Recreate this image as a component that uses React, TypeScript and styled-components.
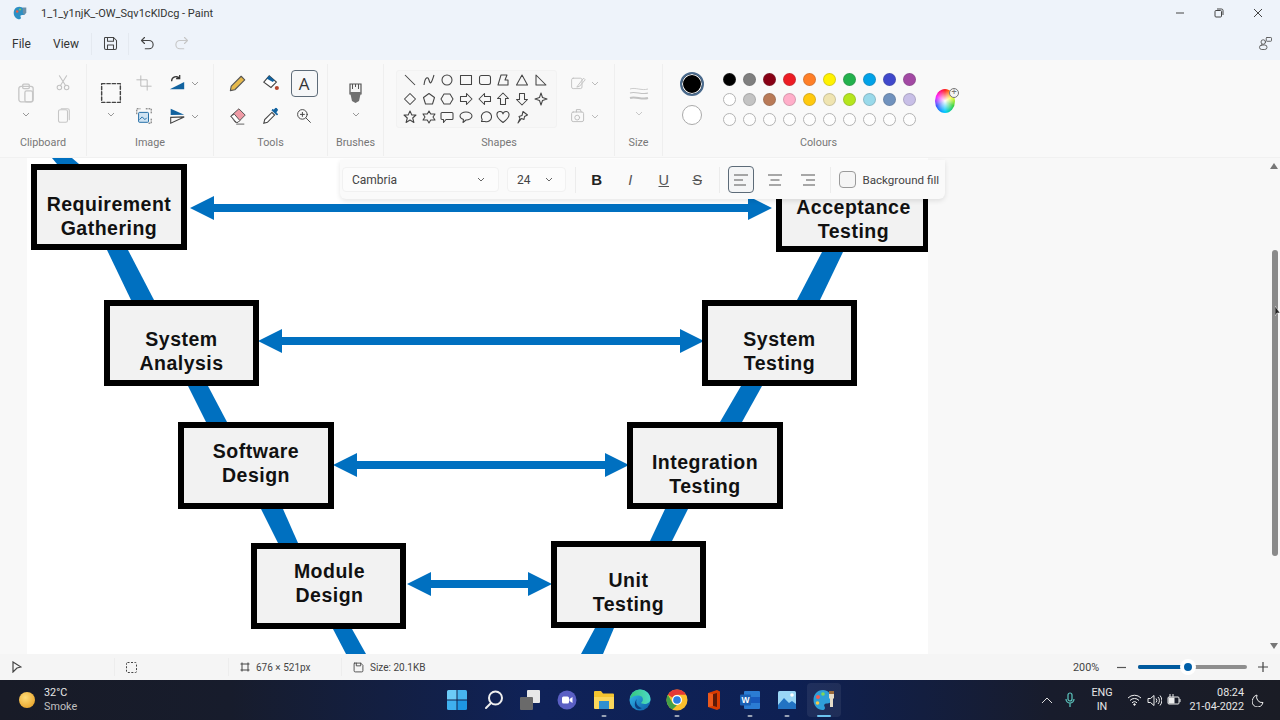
import React from "react";
import styled, { createGlobalStyle } from "styled-components";

const Global = createGlobalStyle`
  html, body { margin: 0; padding: 0; width: 1280px; height: 720px; overflow: hidden; }
  * { box-sizing: border-box; }
  body { font-family: Roboto, "Open Sans", "Liberation Sans", sans-serif; color: #222; }
`;

const Window = styled.div`
  width: 1280px; height: 720px; display: flex; flex-direction: column; background: #f8f8f8; overflow: hidden;
`;
const TitleBar = styled.div`
  height: 26px; flex: none; background: #eef3fa; display: flex; align-items: center; padding: 0 3px 0 13px;
`;
const TitleText = styled.span`
  margin-left: 14px; font-size: 11px; color: #333; flex: 1; white-space: nowrap;
`;
const WinButton = styled.div`
  width: 39px; height: 26px; display: flex; align-items: center; justify-content: center;
`;
const MenuBar = styled.div`
  height: 34px; flex: none; background: #eef3fa; display: flex; align-items: center; padding: 1px 7px 0 12px;
`;
const MenuItem = styled.span<{ $w: number }>`
  width: ${(p) => p.$w}px; font-size: 12px; color: #333; flex: none;
`;
const MenuSep = styled.div`
  width: 1px; height: 22px; background: #e4e9f0; flex: none;
`;
const MenuIcon = styled.div<{ $w: number }>`
  width: ${(p) => p.$w}px; display: flex; justify-content: center; flex: none;
`;
const Spacer = styled.div`flex: 1;`;

const Ribbon = styled.div`
  height: 98px; flex: none; background: #f9f9f9; padding-top: 4px; display: flex; border-bottom: 1px solid #f1f1f1;
`;
const Group = styled.div<{ $w: number; $last?: boolean }>`
  width: ${(p) => p.$w}px; height: 92px; flex: none; border-right: ${(p) => (p.$last ? "none" : "1px solid #efefef")};
  display: flex; flex-direction: column;
`;
const GroupBody = styled.div`
  height: 68.5px; padding-top: 2.5px; display: flex; flex: none;
`;
const GroupLabel = styled.div`
  height: 14px; margin-top: 3.5px; line-height: 14px; text-align: center; font-size: 10.8px; color: #777;
`;
const ToolGrid = styled.div<{ $cols: string; $pad?: number }>`
  display: grid; grid-template-columns: ${(p) => p.$cols}; grid-auto-rows: 33px; padding-left: ${(p) => p.$pad || 0}px;
`;
const Cell = styled.div<{ $col?: number }>`
  display: flex; align-items: center; justify-content: center; min-width: 0;
  ${(p) => (p.$col ? `grid-column: ${p.$col};` : "")}
  svg { flex: none; }
`;
const LargeCell = styled.div<{ $top?: number }>`
  grid-row: span 2; display: flex; flex-direction: column; align-items: center; padding-top: ${(p) => p.$top ?? 15}px; gap: 8px;
  svg { flex: none; }
`;
const ActiveTool = styled.div`
  width: 27px; height: 27px; border: 1px solid #5d6b78; border-radius: 4px; background: #f6f7f8;
  display: flex; align-items: center; justify-content: center; font-size: 17px; line-height: 1; color: #333;
  font-family: "Open Sans", sans-serif;
`;
const ShapePanel = styled.div`
  width: 161px; height: 58px; margin: 3.5px 4.5px 0 12px; background: #f7f7f7; border: 1px solid #f2f2f2; border-radius: 3px;
  display: grid; grid-template-columns: repeat(8, 18.7px); grid-auto-rows: 18.6px; padding: 0 0 0 3.7px; flex: none;
`;
const ShapeCell = styled.div`
  display: flex; align-items: center; justify-content: center;
`;
const CurrentColors = styled.div`
  margin: 5px 0 0 19px; width: 20px; display: flex; flex-direction: column; align-items: center; gap: 9px; flex: none;
`;
const SelectedColor = styled.div`
  width: 24px; height: 24px; border-radius: 50%; border: 2px solid #4a6a8c; background: #000; box-shadow: inset 0 0 0 1px #fff; flex: none;
`;
const SecondColor = styled.div`
  width: 20px; height: 20px; border-radius: 50%; border: 1px solid #aaa; background: #fff; flex: none;
`;
const Palette = styled.div`
  margin: 2.5px 0 0 17px; display: grid; grid-template-columns: repeat(10, 20px); grid-auto-rows: 20px; flex: none;
`;
const SwatchCell = styled.div`display: flex; align-items: center; justify-content: center;`;
const Swatch = styled.div<{ $c?: string }>`
  width: 13px; height: 13px; border-radius: 50%; background: ${(p) => p.$c || "#fdfdfd"};
  border: 1px solid ${(p) => (p.$c && p.$c !== "#fff" ? "rgba(90,90,90,0.25)" : "#b4b4b4")};
`;
const WheelWrap = styled.div`
  position: relative; margin: 22px 0 0 16px; width: 19px; height: 24px; flex: none;
`;
const Wheel = styled.div`
  width: 20px; height: 24px; border-radius: 50%;
  background: radial-gradient(circle, #fff 0%, rgba(255,255,255,0) 70%), conic-gradient(#ff2020, #ff0, #2c2, #0cf, #24f, #f0f, #ff2020);
`;
const WheelPlus = styled.div`
  position: absolute; right: -5px; top: -1px; width: 10px; height: 10px; border-radius: 50%; background: #f4f4f4; border: 1px solid #777;
  font-size: 9px; line-height: 7px; text-align: center; color: #777;
`;

const Workspace = styled.div`
  flex: 1; min-height: 0; position: relative; display: flex; background: #f8f8f8; padding-left: 27px;
`;
const Page = styled.div`
  position: relative; width: 901px; height: 100%; background: #fff; overflow: hidden; flex: none;
`;
const DiagramLines = styled.svg`
  position: absolute; left: 0; top: 0; width: 901px; height: 496px;
`;
const Node = styled.div<{ $x: number; $y: number; $w: number; $h: number }>`
  position: absolute; left: ${(p) => p.$x}px; top: ${(p) => p.$y}px; width: ${(p) => p.$w}px; height: ${(p) => p.$h}px;
  border: 6px solid #000; background: #f2f2f2; display: flex; align-items: center; justify-content: center;
`;
const NodeLabel = styled.div<{ $dx: number; $dy: number }>`
  font-family: "Liberation Sans", Arial, sans-serif; font-weight: 700; font-size: 19.5px; line-height: 24px; letter-spacing: 0.5px;
  color: #111; text-align: center; white-space: pre-line; transform: translate(${(p) => p.$dx}px, ${(p) => p.$dy}px);
`;
const ScrollTrack = styled.div`
  position: absolute; right: 0; top: 0; bottom: 0; width: 12px; display: flex; flex-direction: column; align-items: center; justify-content: space-between; padding: 5px 0 5px;
`;
const ScrollThumb = styled.div`
  position: absolute; right: 2.5px; top: 92px; width: 6px; height: 306px; border-radius: 3px; background: #8a8a8a;
`;
const PointerMark = styled.svg`
  position: absolute; left: 7px; top: 148px;
`;
const TextToolbar = styled.div`
  position: absolute; left: 340px; top: 2px; width: 605px; height: 39px; background: #fafafa; border-radius: 0 0 6px 6px;
  box-shadow: 0 2px 5px rgba(0,0,0,0.10); display: flex; align-items: center; padding-left: 2px;
`;
const SelectBox = styled.div<{ $w: number; $chev: number }>`
  width: ${(p) => p.$w}px; height: 25px; margin-right: 8px; border: 1px solid #f1f1f1; border-radius: 4px; background: #fcfcfc; flex: none;
  display: flex; align-items: center; justify-content: space-between; padding: 0 ${(p) => p.$chev}px 0 9px; font-size: 12px; color: #444;
`;
const ToolbarSep = styled.div<{ $l: number; $r: number }>`
  width: 1px; height: 26px; background: #ececec; flex: none; margin: 0 ${(p) => p.$r}px 0 ${(p) => p.$l}px;
`;
const FmtButton = styled.div<{ $b?: boolean; $i?: boolean; $u?: boolean; $s?: boolean }>`
  width: 33.5px; height: 26px; display: flex; align-items: center; justify-content: center; flex: none; color: #555;
  font-family: "Liberation Sans", sans-serif; font-size: ${(p) => (p.$b ? 15 : 14.5)}px;
  font-weight: ${(p) => (p.$b ? 800 : 400)}; font-style: ${(p) => (p.$i ? "italic" : "normal")};
  text-decoration: ${(p) => (p.$u ? "underline" : p.$s ? "line-through" : "none")};
  ${(p) => (p.$b ? "color:#222;" : "")}
`;
const AlignButton = styled.div<{ $on?: boolean }>`
  width: 26px; height: 27px; margin-right: 7.5px; flex: none; display: flex; align-items: center; justify-content: center;
  border-radius: 4px; border: 1px solid ${(p) => (p.$on ? "#5d6b78" : "transparent")}; background: ${(p) => (p.$on ? "#f4f5f6" : "transparent")};
`;
const CheckBox = styled.div`
  width: 17px; height: 17px; margin: 0 7px 0 8px; border: 1px solid #9a9a9a; border-radius: 4px; background: #f5f5f5; flex: none;
`;
const FillLabel = styled.span`
  font-size: 11.6px; color: #444; white-space: nowrap;
`;

const StatusBar = styled.div`
  height: 26px; flex: none; background: #f5f5f5; display: flex; align-items: center; font-size: 10.8px; color: #444;
`;
const StatusSection = styled.div<{ $w: number; $pad: number; $last?: boolean }>`
  width: ${(p) => p.$w}px; height: 18px; flex: none; padding-left: ${(p) => p.$pad}px; display: flex; align-items: center; gap: 6px; white-space: nowrap;
  font-size: 10px; border-right: ${(p) => (p.$last ? "none" : "1px solid #ededed")};
`;
const ZoomPct = styled.span`
  width: 43.5px; flex: none;
`;
const ZoomTrack = styled.div`
  position: relative; width: 109px; height: 4px; border-radius: 2px; margin: 0 11px 0 12.5px; background: #8e8e8e; flex: none;
`;
const ZoomFill = styled.div`
  width: 46%; height: 100%; border-radius: 2px; background: #005a9e;
`;
const ZoomThumb = styled.div`
  position: absolute; left: 42px; top: -6px; width: 16px; height: 16px; border-radius: 50%; background: #005fa8; border: 4px solid #fff;
`;
const StatusEnd = styled.div`
  width: 12px; flex: none;
`;

const Taskbar = styled.div`
  height: 40px; flex: none; display: flex; align-items: stretch;
  background: linear-gradient(90deg, #181b27 0%, #171c2c 18%, #0f2258 42%, #0e2053 62%, #181c2c 82%, #1a1c25 100%);
  color: #eee;
`;
const Weather = styled.div`
  width: 438.6px; flex: none; padding-left: 19px; display: flex; align-items: center; gap: 9px;
`;
const Sun = styled.div`
  width: 16px; height: 16px; border-radius: 50%; background: radial-gradient(circle at 40% 35%, #ffdc78, #e9a52c 80%);
`;
const WeatherText = styled.div`
  font-size: 10.8px; line-height: 14px; color: #e8e8e8;
`;
const Muted = styled.div`color: #c0c0c0;`;
const AppIcons = styled.div`display: flex; flex: none;`;
const AppCell = styled.div<{ $active?: boolean; $dot?: boolean }>`
  position: relative; width: 36.7px; height: 40px; display: flex; align-items: center; justify-content: center;
  &::before {
    content: ""; display: ${(p) => (p.$active ? "block" : "none")}; position: absolute; left: 2px; right: 1px; top: 3px; bottom: 3px;
    background: rgba(255,255,255,0.07); border-radius: 4px;
  }
  &::after {
    content: ""; display: ${(p) => (p.$dot || p.$active ? "block" : "none")}; position: absolute; bottom: 3px; left: 50%;
    width: ${(p) => (p.$active ? 14 : 5)}px; height: 2px; border-radius: 1px; transform: translateX(-50%);
    background: ${(p) => (p.$active ? "#6cc4f0" : "#9aa3b5")};
  }
  svg { position: relative; }
`;
const Tray = styled.div`
  margin-left: auto; padding-right: 8px; display: flex; align-items: center;
`;
const TrayItem = styled.div<{ $w: number }>`
  width: ${(p) => p.$w}px; flex: none; display: flex; align-items: center; justify-content: center;
`;
const TrayText = styled.div<{ $w: number; $right?: boolean }>`
  width: ${(p) => p.$w}px; flex: none; font-size: 10.8px; line-height: 14px; color: #e6e6e6; text-align: ${(p) => (p.$right ? "right" : "center")};
`;

/* ------- icons ------- */
type IP = { c?: string };
const Svg: React.FC<{ s: number; children: React.ReactNode; sw?: number; c?: string }> = ({ s, children, sw = 1.2, c = "#555" }) => (
  <svg width={s} height={s} viewBox="0 0 20 20" fill="none" stroke={c} strokeWidth={sw} strokeLinecap="round" strokeLinejoin="round">{children}</svg>
);
const Chev = ({ c = "#999" }: IP) => (
  <svg width="8" height="5" viewBox="0 0 8 5" fill="none" stroke={c} strokeWidth="1"><path d="M1 1l3 3 3-3" /></svg>
);
const PasteIcon = () => (<Svg s={22} c="#c6c6c6"><rect x="3.5" y="4" width="13" height="14" rx="2" /><rect x="7" y="2" width="6" height="4" rx="1" /><rect x="9" y="8" width="7" height="10" rx="1.5" /></Svg>);
const CutIcon = () => (<Svg s={18} c="#c2c2c2"><circle cx="6" cy="15" r="2.5" /><circle cx="14" cy="15" r="2.5" /><path d="M7 13L14 2M13 13L6 2" /></Svg>);
const CopyIcon = () => (<Svg s={18} c="#c6c6c6"><rect x="5" y="3" width="10" height="14" rx="2" /><path d="M8 2h7a2 2 0 012 2v10" /></Svg>);
const SelectIcon = () => (<Svg s={22} sw={1.3} c="#444"><rect x="1.500" y="1.500" width="17" height="17" strokeDasharray="3 1.800" /></Svg>);
const CropIcon = () => (<Svg s={16} c="#bbb"><path d="M6 1v13h13M1 6h13v13" /></Svg>);
const RotateIcon = () => (<svg width="18" height="18" viewBox="0 0 20 20"><path d="M2 17L18 9v8z" fill="#11629f" /><path d="M4 8a5 5 0 019-3M13 1v4h-4" fill="none" stroke="#333" strokeWidth="1.4" /></svg>);
const ResizeIcon = () => (<svg width="18" height="18" viewBox="0 0 20 20" fill="none"><rect x="4" y="6" width="11" height="11" rx="1" fill="#cfe3f2" stroke="#11629f" /><path d="M5 14l3-3 3 3 2-2" stroke="#11629f" /><path d="M12 2h6v6M2 8V2h4M18 13v5h-3" stroke="#555" strokeDasharray="2 1" /></svg>);
const FlipIcon = () => (<svg width="18" height="18" viewBox="0 0 20 20"><path d="M3 2l15 6.5L3 9z" fill="#11629f" /><path d="M3 11.5l15-.5L3 18z" fill="none" stroke="#444" strokeWidth="1.2" /></svg>);
const PencilIcon = () => (<svg width="18" height="18" viewBox="0 0 20 20"><path d="M13.5 2.5l4 4L6.5 17.5l-5 1 1-5z" fill="#e6b94c" stroke="#555" strokeWidth="1.2" strokeLinejoin="round" /></svg>);
const FillIcon = () => (<svg width="18" height="18" viewBox="0 0 20 20"><path d="M2 9l6-7 8 7-6 6z" fill="#fff" stroke="#444" strokeWidth="1.2" /><path d="M5 5l3-3 6 5-2 2z" fill="#11629f" /><circle cx="16.5" cy="15.5" r="2.3" fill="#b5452c" /></svg>);
const EraserIcon = () => (<svg width="18" height="18" viewBox="0 0 20 20"><path d="M2 10L11 2l7 7-8 8H7z" fill="#ef9aa5" stroke="#555" strokeWidth="1.1" /><path d="M2 10l6 7h2l2-2-6-7z" fill="#fff" stroke="#555" strokeWidth="1.1" /><path d="M8 19h9" stroke="#555" /></svg>);
const PickerIcon = () => (<svg width="18" height="18" viewBox="0 0 20 20"><path d="M11 6l3 3-8 8-4 1 1-4z" fill="#fff" stroke="#444" strokeWidth="1.2" /><path d="M11 3.5l5.5 5.5 1-1-2-2L17 4a1.7 1.7 0 00-2.5-2.2L13 3.5l-1-1z" fill="#11629f" stroke="#11629f" /></svg>);
const ZoomIcon = () => (<Svg s={16} c="#444"><circle cx="8" cy="8" r="6" /><path d="M12.5 12.5L18 18M8 5.5v5M5.5 8h5" /></Svg>);
const BrushIcon = () => (<svg width="13" height="21" viewBox="0 0 13 21"><path d="M1 1h11v10H1z" fill="#f4f4f4" stroke="#555" strokeWidth="1.200" /><path d="M1 9h11l-2 9-3.500 2L3 18z" fill="#707070" /><path d="M3.500 1v5M6.500 1v3M9.500 1v5" stroke="#555" strokeWidth="1" /></svg>);
const OutlineIcon = () => (<Svg s={16} c="#c2c2c2"><rect x="2" y="4" width="13" height="13" rx="2" /><path d="M10 13l7-9 2 2-7 8-3 1z" /></Svg>);
const ShapeFillIcon = () => (<Svg s={16} c="#bdbdbd"><rect x="2" y="5" width="15" height="12" rx="2" /><circle cx="9" cy="12" r="3" /><path d="M8 5V2h5l1 3" /></Svg>);
const SizeIcon = () => (<svg width="20" height="16" viewBox="0 0 20 16" fill="none" stroke="#c2c2c2"><path d="M1 2c5-2 12 2 18 0" strokeWidth=".8" /><path d="M1 6c5-2 12 2 18 0" strokeWidth="1.2" /><path d="M1 11c5-2 12 2 18 0" strokeWidth="2" /></svg>);

const shapes: React.ReactNode[] = [
  <path d="M2 2l10 10" />, <path d="M2 12c1-8 4-9 5-5s2 5 5-5" />, <circle cx="7" cy="7" r="5" />,
  <rect x="1.5" y="2.5" width="11" height="9" />, <rect x="1.5" y="2.5" width="11" height="9" rx="2" />,
  <path d="M5 2h6L9 7h3v5H2z" />, <path d="M7 2l5.5 10h-11z" />, <path d="M2 2l10 10H2z" />,
  <path d="M7 1.5L12.5 7 7 12.5 1.5 7z" />, <path d="M7 1.5l5.5 4-2 6.5h-7l-2-6.5z" />, <path d="M4 2h6l3 5-3 5H4L1 7z" />,
  <path d="M1.5 4.5h6V1.5L13 7l-5.5 5.5v-3h-6z" />, <path d="M12.5 4.5h-6V1.5L1 7l5.5 5.5v-3h6z" />,
  <path d="M4.5 12.5v-6h-3L7 1l5.5 5.5h-3v6z" />, <path d="M4.5 1.5v6h-3L7 13l5.5-5.5h-3v-6z" />, <path d="M7 1l1.5 4.5L13 7l-4.5 1.5L7 13l-1.5-4.5L1 7l4.5-1.5z" />,
  <path d="M7 1l1.8 4h4.2l-3.3 3 1.2 4.5L7 10l-3.9 2.5L4.3 8 1 5h4.2z" />, <path d="M7 1l1.7 3H13l-2 3 2 3H8.700L7 13l-1.700-3H1l2-3-2-3h4.300z" />,
  <path d="M2 2.5h10a1 1 0 011 1v5a1 1 0 01-1 1H6l-2.5 3v-3H2a1 1 0 01-1-1v-5a1 1 0 011-1z" />,
  <path d="M7 2c3.3 0 6 1.8 6 4s-2.7 4-6 4l-3 2.5.5-3C2.4 8.8 1 7.500 1 6c0-2.200 2.700-4 6-4z" />,
  <path d="M7 2a5 5 0 110 9.500H3.500l.7-2A5 5 0 017 2z" />,
  <path d="M7 12.500C3 9.500 1 7.500 1 5a3 3 0 016-1 3 3 0 016 1c0 2.500-2 4.500-6 7.500z" />,
  <path d="M8 1.500l4.500 3.500-3 1.500-.5 3-2.500-1L3 13l2-4.500-1-2 3-1z" />,
];
const ShapeSvg: React.FC<{ children: React.ReactNode }> = ({ children }) => (
  <svg width="14" height="14" viewBox="0 0 14 14" fill="none" stroke="#444" strokeWidth="1.05" strokeLinejoin="round">{children}</svg>
);

const row1 = ["#000", "#7f7f7f", "#880015", "#ed1c24", "#ff7f27", "#fff200", "#22b14c", "#00a2e8", "#3f48cc", "#a349a4"];
const row2 = ["#fff", "#c3c3c3", "#b97a57", "#ffaec9", "#ffc90e", "#efe4b0", "#b5e61d", "#99d9ea", "#7092be", "#c8bfe7"];
const row3 = Array.from({ length: 10 }, () => undefined as string | undefined);

const nodes = [
  { x: 4, y: 6, w: 156, h: 86, dx: 0, dy: 9, t: "Requirement\nGathering" },
  { x: 749, y: 8, w: 153, h: 86, dx: 1, dy: 10, t: "Acceptance\nTesting" },
  { x: 77, y: 142, w: 155, h: 86, dx: 0, dy: 8, t: "System\nAnalysis" },
  { x: 675, y: 142, w: 155, h: 86, dx: 0, dy: 8, t: "System\nTesting" },
  { x: 151, y: 264, w: 156, h: 87, dx: 0, dy: -3, t: "Software\nDesign" },
  { x: 600, y: 264, w: 156, h: 87, dx: 0, dy: 8, t: "Integration\nTesting" },
  { x: 224, y: 385, w: 155, h: 86, dx: 1, dy: -3, t: "Module\nDesign" },
  { x: 524, y: 383, w: 155, h: 87, dx: 0, dy: 7, t: "Unit\nTesting" },
];

const BLUE = "#0070c0";
const bars = [
  "25,0 45,0 52,6 30,6", "80,92 101,92 127,142 104,142", "795,94 816,94 793,142 770,142",
  "161,228 181,228 200,264 179,264", "714,228 735,228 715,264 693,264", "234,351 256,351 271,385 251,385",
  "638,351 661,351 645,383 623,383", "306,471 325,471 339,496 319,496", "568,470 587,470 576,496 554,496",
];
const arrow = (a: number, b: number, y: number) =>
  `${a},${y} ${a + 24},${y - 12} ${a + 24},${y - 4} ${b - 24},${y - 4} ${b - 24},${y - 12} ${b},${y} ${b - 24},${y + 12} ${b - 24},${y + 4} ${a + 24},${y + 4} ${a + 24},${y + 12}`;
const arrows = [arrow(163, 745, 50), arrow(231, 677, 183), arrow(306, 602, 307), arrow(380, 525, 426)];

const Edge = () => (
  <svg width="24" height="24" viewBox="0 0 24 24">
    <defs><linearGradient id="edgeA" x1="0" y1="0" x2="1" y2="1"><stop offset="0" stopColor="#35c1f1" /><stop offset="1" stopColor="#0c59a4" /></linearGradient>
      <linearGradient id="edgeB" x1="0" y1="0" x2="1" y2="0"><stop offset="0" stopColor="#37c87a" /><stop offset="1" stopColor="#4bd8c8" /></linearGradient></defs>
    <circle cx="12" cy="12" r="10.500" fill="url(#edgeA)" />
    <path d="M2 11C3 5 7 1.500 12 1.500c6 0 10.500 4.500 10.500 9.500 0 3.500-3 5-6 5-2 0-3.500-1-3.500-1 3-2 2.500-7-2-7.500-4-.5-7.500 1-9 3.500z" fill="url(#edgeB)" />
    <path d="M9 11c-2 3 0 8 5 9-1 .5-2 1-3 1-4 0-6-6-2-10z" fill="#0c3f80" />
  </svg>
);
const Chrome = () => (
  <svg width="24" height="24" viewBox="0 0 24 24">
    <circle cx="12" cy="12" r="10.500" fill="#fbc02d" />
    <path d="M12 1.500a10.500 10.500 0 019.100 5.250H12a5.250 5.250 0 00-4.550 2.630L2.900 6.750A10.500 10.500 0 0112 1.500z" fill="#e53935" />
    <path d="M2.900 6.750l4.550 7.880A5.250 5.250 0 0012 17.250l-4.550 4.200A10.500 10.500 0 012.900 6.750z" fill="#43a047" />
    <circle cx="12" cy="12" r="5" fill="#fff" /><circle cx="12" cy="12" r="3.800" fill="#2a7de1" />
  </svg>
);
const PaintApp = () => (
  <svg width="24" height="24" viewBox="0 0 24 24">
    <path d="M11 2C5 2 1.500 6.500 1.500 12c0 6 4.500 10 9 10 2.500 0 3-2 2-3.500-1-1.500 0-3 2-3 3 0 5-1 5-4.500C19.500 6 16 2 11 2z" fill="#2f9fd8" />
    <circle cx="6" cy="9" r="2" fill="#f25c54" /><circle cx="11" cy="6" r="1.800" fill="#7ed957" /><circle cx="5.500" cy="15" r="1.800" fill="#f7c948" />
    <path d="M17 3h5v7l-1 1v8h-3v-8l-1-1z" fill="#e6dcc8" /><path d="M17 3h5v3h-5z" fill="#9a6a3c" />
  </svg>
);

export default function App() {
  return (
    <Window>
      <Global />
      <TitleBar>
        <svg width="14" height="14" viewBox="0 0 20 20"><path d="M9 1C4 1 1 5 1 10c0 5 4 9 8 9 2 0 3-2 2-3-1-2 0-3 2-3 3 0 5-1 5-4 0-4-4-8-9-8z" fill="#2d8fc4" /><circle cx="6" cy="8" r="1.800" fill="#e8604c" /><circle cx="10" cy="5" r="1.600" fill="#7cc35a" /><path d="M14 2h5v7l-2 3h-2l-1-3z" fill="#6b8fa8" /></svg>
        <TitleText>1_1_y1njK_-OW_Sqv1cKlDcg - Paint</TitleText>
        <WinButton><svg width="10" height="10" viewBox="0 0 10 10" stroke="#444"><path d="M1 5h8" /></svg></WinButton>
        <WinButton><svg width="10" height="10" viewBox="0 0 10 10" fill="none" stroke="#444"><rect x="1" y="2.500" width="6.500" height="6.500" rx="1" /><path d="M3 1h4.500A1.500 1.500 0 019 2.500V7" /></svg></WinButton>
        <WinButton><svg width="10" height="10" viewBox="0 0 10 10" stroke="#444"><path d="M1 1l8 8M9 1l-8 8" /></svg></WinButton>
      </TitleBar>
      <MenuBar>
        <MenuItem $w={41}>File</MenuItem>
        <MenuItem $w={38}>View</MenuItem>
        <MenuSep />
        <MenuIcon $w={36}><Svg s={15} c="#444" sw={1.4}><path d="M3 2h11l4 4v10a2 2 0 01-2 2H4a2 2 0 01-2-2V3a1 1 0 011-1z" /><path d="M6 2v5h8V2M6 18v-6h8v6" /></Svg></MenuIcon>
        <MenuSep />
        <MenuIcon $w={36}><Svg s={15} c="#444" sw={1.5}><path d="M6 2L2 6l4 4M2 6h10a5 5 0 010 11H7" /></Svg></MenuIcon>
        <MenuIcon $w={32}><Svg s={15} c="#c6c6c6" sw={1.5}><path d="M14 2l4 4-4 4M18 6H8a5 5 0 000 11h5" /></Svg></MenuIcon>
        <Spacer />
        <Svg s={15} c="#555"><rect x="11" y="2" width="7" height="5" rx="1" /><circle cx="7" cy="8" r="3" /><rect x="2" y="12" width="10" height="6" rx="3" /></Svg>
      </MenuBar>

      <Ribbon>
        <Group $w={87}>
          <GroupBody>
            <ToolGrid $cols="32px 4.500px 33px" $pad={10}>
              <LargeCell><PasteIcon /><Chev /></LargeCell>
              <Cell $col={3}><CutIcon /></Cell>
              <Cell $col={3}><CopyIcon /></Cell>
            </ToolGrid>
          </GroupBody>
          <GroupLabel>Clipboard</GroupLabel>
        </Group>
        <Group $w={127}>
          <GroupBody>
            <ToolGrid $cols="33px 33px 33px 4px" $pad={7}>
              <LargeCell><SelectIcon /><Chev /></LargeCell>
              <Cell><CropIcon /></Cell><Cell><RotateIcon /></Cell><Cell><Chev /></Cell>
              <Cell><ResizeIcon /></Cell><Cell><FlipIcon /></Cell><Cell><Chev /></Cell>
            </ToolGrid>
          </GroupBody>
          <GroupLabel>Image</GroupLabel>
        </Group>
        <Group $w={114}>
          <GroupBody>
            <ToolGrid $cols="33px 33px 33px" $pad={7.500}>
              <Cell><PencilIcon /></Cell><Cell><FillIcon /></Cell><Cell><ActiveTool>A</ActiveTool></Cell>
              <Cell><EraserIcon /></Cell><Cell><PickerIcon /></Cell><Cell><ZoomIcon /></Cell>
            </ToolGrid>
          </GroupBody>
          <GroupLabel>Tools</GroupLabel>
        </Group>
        <Group $w={56}>
          <GroupBody>
            <ToolGrid $cols="55px">
              <LargeCell $top={16}><BrushIcon /><Chev /></LargeCell>
            </ToolGrid>
          </GroupBody>
          <GroupLabel>Brushes</GroupLabel>
        </Group>
        <Group $w={231}>
          <GroupBody>
            <ShapePanel>
              {shapes.map((d, i) => (<ShapeCell key={i}><ShapeSvg>{d}</ShapeSvg></ShapeCell>))}
            </ShapePanel>
            <ToolGrid $cols="33px 1px">
              <Cell><OutlineIcon /></Cell><Cell><Chev c="#bbb" /></Cell>
              <Cell><ShapeFillIcon /></Cell><Cell><Chev c="#bbb" /></Cell>
            </ToolGrid>
          </GroupBody>
          <GroupLabel>Shapes</GroupLabel>
        </Group>
        <Group $w={48}>
          <GroupBody>
            <ToolGrid $cols="47px">
              <LargeCell $top={20}><SizeIcon /><Chev c="#c8c8c8" /></LargeCell>
            </ToolGrid>
          </GroupBody>
          <GroupLabel>Size</GroupLabel>
        </Group>
        <Group $w={311} $last>
          <GroupBody>
            <CurrentColors><SelectedColor /><SecondColor /></CurrentColors>
            <Palette>
              {[...row1, ...row2, ...row3].map((c, i) => (<SwatchCell key={i}><Swatch $c={c} /></SwatchCell>))}
            </Palette>
            <WheelWrap><Wheel /><WheelPlus>+</WheelPlus></WheelWrap>
          </GroupBody>
          <GroupLabel>Colours</GroupLabel>
        </Group>
      </Ribbon>

      <Workspace>
        <Page>
          <DiagramLines viewBox="0 0 901 496">
            {bars.map((p) => (<polygon key={p} points={p} fill={BLUE} />))}
            {arrows.map((p) => (<polygon key={p} points={p} fill={BLUE} />))}
          </DiagramLines>
          {nodes.map((n) => (
            <Node key={n.t} $x={n.x} $y={n.y} $w={n.w} $h={n.h}>
              <NodeLabel $dx={n.dx} $dy={n.dy}>{n.t}</NodeLabel>
            </Node>
          ))}
        </Page>
        <TextToolbar>
          <SelectBox $w={157} $chev={13}>Cambria<Chev c="#666" /></SelectBox>
          <SelectBox $w={59} $chev={12}>24<Chev c="#666" /></SelectBox>
          <ToolbarSep $l={1} $r={4} />
          <FmtButton $b>B</FmtButton>
          <FmtButton $i>I</FmtButton>
          <FmtButton $u>U</FmtButton>
          <FmtButton $s>S</FmtButton>
          <ToolbarSep $l={5} $r={8} />
          <AlignButton $on><svg width="14" height="12" viewBox="0 0 14 12" stroke="#555"><path d="M0 1h14M0 6h9M0 11h12" /></svg></AlignButton>
          <AlignButton><svg width="14" height="12" viewBox="0 0 14 12" stroke="#555"><path d="M0 1h14M2.500 6h9M1 11h12" /></svg></AlignButton>
          <AlignButton><svg width="14" height="12" viewBox="0 0 14 12" stroke="#555"><path d="M0 1h14M5 6h9M2 11h12" /></svg></AlignButton>
          <ToolbarSep $l={1} $r={0} />
          <CheckBox />
          <FillLabel>Background fill</FillLabel>
        </TextToolbar>
        <ScrollTrack>
          <svg width="8" height="6" viewBox="0 0 8 6" fill="#777"><path d="M4 0l4 6H0z" /></svg>
          <svg width="8" height="6" viewBox="0 0 8 6" fill="#777"><path d="M4 6l4-6H0z" /></svg>
          <ScrollThumb />
          <PointerMark width="5" height="12" viewBox="0 0 5 12"><path d="M0 0l5 7H2l-2 3z" fill="#222" stroke="#fff" strokeWidth=".5" /></PointerMark>
        </ScrollTrack>
      </Workspace>

      <StatusBar>
        <StatusSection $w={115} $pad={12}><svg width="10" height="12" viewBox="0 0 10 12" fill="none" stroke="#444" strokeWidth="1.2"><path d="M1 1l8 5-4 1-4 4z" /></svg></StatusSection>
        <StatusSection $w={114} $pad={11}><svg width="11" height="11" viewBox="0 0 11 11" fill="none" stroke="#444" strokeDasharray="2 1.500"><rect x=".5" y=".5" width="10" height="10" rx="1" /></svg></StatusSection>
        <StatusSection $w={113} $pad={11}><svg width="10" height="10" viewBox="0 0 10 10" fill="none" stroke="#444"><path d="M2 .5v9M8 .5v9M.5 2h9M.5 8h9" /></svg>676 × 521px</StatusSection>
        <StatusSection $w={120} $pad={11} $last><Svg s={11} c="#444" sw={1.6}><path d="M3 2h11l4 4v10a2 2 0 01-2 2H4a2 2 0 01-2-2V3a1 1 0 011-1z" /><path d="M6 2v5h8V2" /></Svg>Size: 20.1KB</StatusSection>
        <Spacer />
        <ZoomPct>200%</ZoomPct>
        <svg width="9" height="9" viewBox="0 0 9 9" stroke="#555" strokeWidth="1.2"><path d="M0 4.500h9" /></svg>
        <ZoomTrack><ZoomFill /><ZoomThumb /></ZoomTrack>
        <svg width="10" height="10" viewBox="0 0 10 10" stroke="#444" strokeWidth="1.2"><path d="M0 5h10M5 0v10" /></svg>
        <StatusEnd />
      </StatusBar>

      <Taskbar>
        <Weather>
          <Sun />
          <WeatherText>32°C<Muted>Smoke</Muted></WeatherText>
        </Weather>
        <AppIcons>
          <AppCell><svg width="20" height="20" viewBox="0 0 20 20"><path d="M0 1.500A1.500 1.500 0 011.500 0h8v9.500H0z" fill="#6ccbf7" /><path d="M10.500 0h8A1.500 1.500 0 0120 1.500v8h-9.500z" fill="#47b5ef" /><path d="M0 10.500h9.500V20h-8A1.500 1.500 0 010 18.500z" fill="#3fb0ee" /><path d="M10.500 10.500H20v8a1.500 1.500 0 01-1.500 1.500h-8z" fill="#1e97e3" /></svg></AppCell>
          <AppCell><svg width="20" height="20" viewBox="0 0 20 20" fill="none" stroke="#eee" strokeWidth="2"><circle cx="11.500" cy="8" r="6.500" /><path d="M7 13l-5 5" strokeLinecap="round" /></svg></AppCell>
          <AppCell><svg width="22" height="22" viewBox="0 0 22 22"><rect x="8" y="1" width="13" height="13" rx="1" fill="#e8e8e8" /><rect x="1" y="8" width="13" height="13" rx="1" fill="#6a6a6a" /></svg></AppCell>
          <AppCell><svg width="20" height="20" viewBox="0 0 20 20"><circle cx="10" cy="10" r="9.500" fill="#5a5fc4" /><rect x="5" y="6.500" width="7" height="7" rx="1.500" fill="#fff" /><path d="M12.500 9l3-2v6l-3-2z" fill="#fff" /></svg></AppCell>
          <AppCell $dot><svg width="22" height="20" viewBox="0 0 22 20"><path d="M1 2a1 1 0 011-1h6l2 2.500h10a1 1 0 011 1V8H1z" fill="#f4c430" /><path d="M1 7h20v11a1 1 0 01-1 1H2a1 1 0 01-1-1z" fill="#fbd75b" /><rect x="6" y="11" width="10" height="8" fill="#2f8fd0" /></svg></AppCell>
          <AppCell><Edge /></AppCell>
          <AppCell $dot><Chrome /></AppCell>
          <AppCell><svg width="18" height="22" viewBox="0 0 18 22"><path d="M3 4l9-3 3 1.500v17L12 21l-9-3z" fill="#d83b01" /><path d="M7 5.500l5-1.500v14l-5-1.500z" fill="#5c1a08" /><path d="M3 4l5 1v12l-5 1z" fill="#eb5a1d" /></svg></AppCell>
          <AppCell $dot><svg width="22" height="20" viewBox="0 0 22 20"><rect x="5" y="1" width="16" height="18" rx="1" fill="#2b7cd3" /><rect x="5" y="7" width="16" height="6" fill="#185abd" /><rect x="1" y="4.500" width="11" height="11" rx="1" fill="#1a5fb4" /><text x="6.500" y="13" textAnchor="middle" fontFamily="Liberation Sans, sans-serif" fontWeight="700" fontSize="8.500" fill="#fff">W</text></svg></AppCell>
          <AppCell $dot><svg width="20" height="20" viewBox="0 0 20 20"><rect x="1" y="1" width="18" height="18" rx="1.500" fill="#9ad6f5" /><path d="M1 15l6-7 5 5 3-2 4 3v5H1z" fill="#2273c3" /><circle cx="15" cy="5" r="1.800" fill="#fff" /></svg></AppCell>
          <AppCell $active><PaintApp /></AppCell>
        </AppIcons>
        <Tray>
          <TrayItem $w={22}><svg width="12" height="7" viewBox="0 0 12 7" fill="none" stroke="#ddd" strokeWidth="1"><path d="M1 6l5-5 5 5" /></svg></TrayItem>
          <TrayItem $w={24}><svg width="10" height="16" viewBox="0 0 10 16" fill="none" stroke="#5ec8c0" strokeWidth="1.200"><rect x="3" y="1" width="4" height="8" rx="2" /><path d="M1 7a4 4 0 008 0M5 11v4" /></svg></TrayItem>
          <TrayText $w={40}>ENG<br />IN</TrayText>
          <TrayItem $w={24}><svg width="15" height="12" viewBox="0 0 15 12" fill="none" stroke="#eee" strokeWidth="1"><path d="M1 4a9 9 0 0113 0M3 6.500a6 6 0 019 0M5 9a3 3 0 015 0" /><circle cx="7.500" cy="10.500" r=".8" fill="#eee" /></svg></TrayItem>
          <TrayItem $w={17}><svg width="15" height="13" viewBox="0 0 15 13" fill="none" stroke="#eee" strokeWidth="1"><path d="M1 4.500h2.500L7 1.500v10l-3.500-3H1zM9 4.500a3 3 0 010 4M11 3a5 5 0 010 7M13 1.500a7.500 7.500 0 010 10" /></svg></TrayItem>
          <TrayItem $w={22}><svg width="14" height="12" viewBox="0 0 14 12" fill="none" stroke="#eee" strokeWidth="1"><rect x="1" y="3" width="11" height="7" rx="1" /><path d="M13 5v3" /><rect x="2" y="4" width="5" height="5" fill="#eee" /><path d="M3 0v3M6 0v3" /></svg></TrayItem>
          <TrayText $w={59} $right>08:24<br />21-04-2022</TrayText>
          <TrayItem $w={28}><svg width="12" height="13" viewBox="0 0 12 13" fill="none" stroke="#eee" strokeWidth="1"><path d="M5 1a5.500 5.500 0 006 7.500A5.500 5.500 0 111 4.500 5.500 5.500 0 015 1z" /></svg></TrayItem>
        </Tray>
      </Taskbar>
    </Window>
  );
}
